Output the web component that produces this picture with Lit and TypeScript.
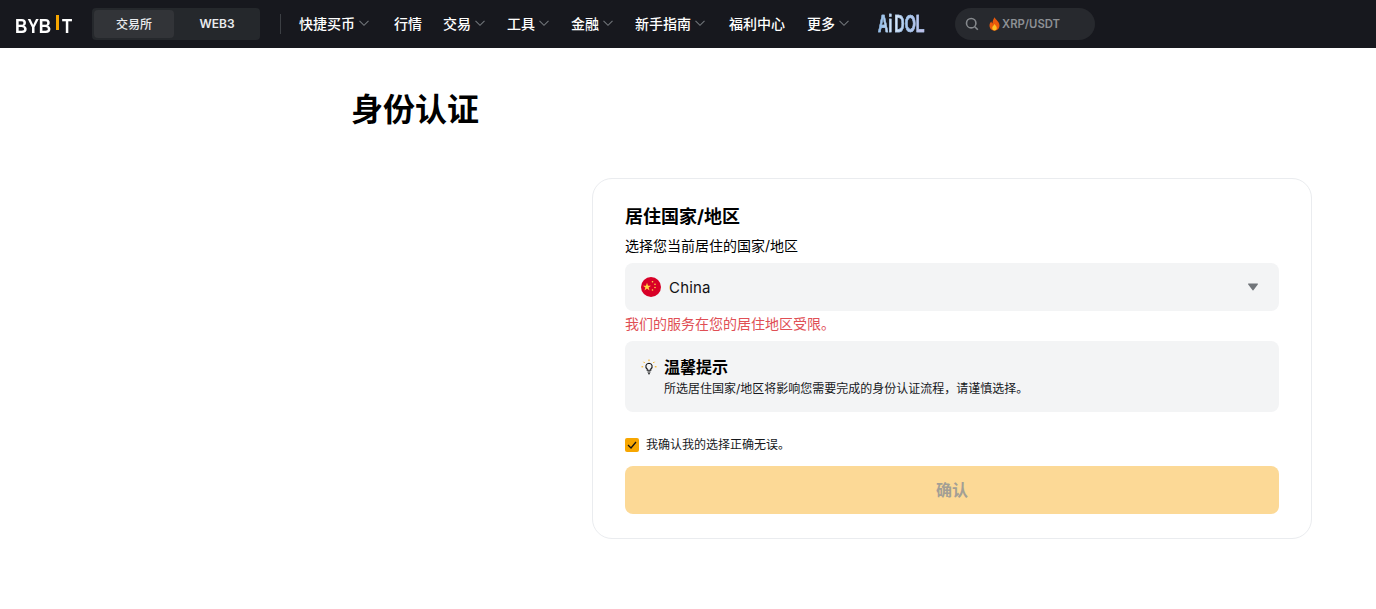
import { LitElement, html, css } from "lit";
import { customElement } from "lit/decorators.js";

const chev = html`<svg class="chev" width="12" height="12" viewBox="0 0 12 12" fill="none"><path d="M1.500 3.800 6 8.300l4.500-4.500" stroke="#71757a" stroke-width="1.100"/></svg>`;

const navItems: [string, boolean, number][] = [
  ["快捷买币", true, 24],
  ["行情", false, 21],
  ["交易", true, 21],
  ["工具", true, 21],
  ["金融", true, 21],
  ["新手指南", true, 23],
  ["福利中心", false, 22],
  ["更多", true, 0],
];

@customElement("app-root")
export class AppRoot extends LitElement {
  static styles = css`
    :host { display: block; min-height: 609px; background: #fff; color: #000;
      font-family: Inter, "Noto Sans CJK SC", sans-serif; }
    .top { height: 48px; background: #17181e; display: flex; align-items: center; padding-left: 15px; box-sizing: border-box; }
    .logo { width: 57px; height: 20px; margin-top: 3px; font: 700 19.500px/20px "Liberation Sans", sans-serif; color: #fff; display: flex; align-items: center; }
    .logo span { display: block; flex: none; transform-origin: left center; }
    .logo .a { width: 41px; transform: scaleX(0.88); }
    .logo .t { width: 10px; transform: scaleX(0.85); }
    .logo i { display: block; flex: none; width: 3px; height: 15px; background: #f7a600; margin: -7px 3px 0 0; }
    .tabs { margin-left: 20px; width: 168px; height: 32px; border-radius: 4px; background: #25282c; padding: 2px; box-sizing: border-box; display: flex; }
    .tab { flex: 1; display: flex; align-items: center; justify-content: center; font-size: 12px; font-weight: 500; color: #fff; border-radius: 4px; padding-bottom: 1px; }
    .tab.on { flex: 0 0 80px; background: #323438; color: #eaecef; }
    .tab.web { font-weight: 600; color: #eaecef; padding-left: 2px; }
    .sep { width: 1px; height: 20px; background: #3c3f44; margin: 0 18px 0 20px; }
    .nav { display: flex; align-items: center; font-size: 14px; font-weight: 500; color: #fff; padding-bottom: 2px; }
    .item { display: flex; align-items: center; gap: 2px; }
    .chev { display: block; margin-left: 1px; }
    .aidol { margin-left: 28px; width: 48px; height: 24px; }
    .aidol span { display: inline-block; font: 700 23px/24px "Liberation Sans", sans-serif; white-space: nowrap; transform: scaleX(0.62); transform-origin: left center; word-spacing: -3px;
      background: linear-gradient(100deg, #7fb2e6, #e2ecf8 35%, #a8c8ee 60%, #c6bde8); -webkit-background-clip: text; background-clip: text; color: transparent; -webkit-text-stroke: 0.6px #9dbfe6; }
    .search { margin-left: 29px; width: 140px; height: 32px; border-radius: 16px; background: #27292e; display: flex; align-items: center; padding-left: 10px; box-sizing: border-box; font-size: 11.300px; font-weight: 600; color: #8d9094; }
    .search svg { display: block; }
    .fire { margin-left: 10px; margin-right: 2px; }
    main { padding: 40px 64px 70px 351px; }
    h1 { margin: 0; font-size: 32px; line-height: 44px; font-weight: 700; }
    .card { margin: 46px 0 0 241px; border: 1px solid #eaecef; border-radius: 20px; padding: 26px 32px 24px; height: 361px; box-sizing: border-box; }
    h2 { margin: 0; font-size: 18px; line-height: 24px; font-weight: 700; }
    .sub { margin-top: 9px; font-size: 14px; line-height: 16px; }
    .select { margin-top: 9px; height: 48px; border-radius: 8px; background: #f3f4f5; display: flex; align-items: center; padding: 0 20px 0 16px; font-size: 15px; color: #121214; }
    .select .name { margin-left: 8px; flex: 1; letter-spacing: 0.2px; }
    .err { margin-top: 4px; font-size: 14px; line-height: 18px; color: #e04f55; white-space: nowrap; }
    .tip { margin-top: 8px; height: 71px; border-radius: 8px; background: #f3f4f5; display: flex; padding: 15px 16px 0; box-sizing: border-box; gap: 7px; }
    .tip svg { display: block; margin-top: 3px; }
    .tip b { display: block; font-size: 16px; line-height: 22px; font-weight: 600; margin-bottom: 3px; }
    .tip span { display: block; font-size: 12px; line-height: 16px; color: #16181c; }
    .chk { margin-top: 25px; display: flex; align-items: center; gap: 7px; font-size: 12px; line-height: 16px; color: #16181c; }
    .box { width: 14px; height: 14px; border-radius: 2px; background: #f7a600; display: flex; align-items: center; justify-content: center; }
    .btn { margin-top: 13px; height: 48px; border-radius: 8px; background: #fcd996; display: flex; align-items: center; justify-content: center; font-size: 16px; font-weight: 700; color: #a39f95; padding-bottom: 2px; box-sizing: border-box; }
  `;

  render() {
    return html`
      <div class="top">
        <div class="logo"><span class="a">BYB</span><i></i><span class="t">T</span></div>
        <div class="tabs"><div class="tab on">交易所</div><div class="tab web">WEB3</div></div>
        <div class="sep"></div>
        <div class="nav">
          ${navItems.map(([t, c, m]) => html`<div class="item" style="margin-right:${m}px">${t}${c ? chev : ""}</div>`)}
        </div>
        <div class="aidol"><span>Ai DOL</span></div>
        <div class="search">
          <svg width="14" height="14" viewBox="0 0 14 14" fill="none"><circle cx="6.200" cy="6.200" r="4.700" stroke="#85888c" stroke-width="1.600"/><path d="m9.800 9.800 3 3" stroke="#85888c" stroke-width="1.600"/></svg>
          <svg class="fire" width="11" height="14" viewBox="0 0 11 14"><path d="M5.600.3c.6 2.300 4.900 4.200 4.900 8.200 0 3.100-2.300 5.200-5 5.200S.5 11.700.5 8.600c0-1.900 1-3.200 1.900-4 .1 1 .5 1.700 1.100 2C3.500 4.300 4.300 2 5.600.3z" fill="#e8590c"/><path d="M5.500 7c.5 1.200 2.300 1.900 2.300 4 0 1.500-1 2.500-2.300 2.500S3.200 12.500 3.200 11c0-1.800 1.700-2.500 2.300-4z" fill="#fbbf24"/></svg>
          XRP/USDT
        </div>
      </div>
      <main>
        <h1>身份认证</h1>
        <div class="card">
          <h2>居住国家/地区</h2>
          <div class="sub">选择您当前居住的国家/地区</div>
          <div class="select">
            <svg width="20" height="20" viewBox="0 0 20 20"><circle cx="10" cy="10" r="10" fill="#d80027"/><path d="m6 5.800 1 2.900h3L7.600 10.500l.9 2.900L6 11.600l-2.500 1.800.9-2.900L2 8.700h3z" fill="#ffda44"/><g fill="#ffda44"><circle cx="11.500" cy="4.800" r=".8"/><circle cx="14" cy="7.300" r=".8"/><circle cx="14" cy="10.500" r=".8"/><circle cx="11.500" cy="13" r=".8"/></g></svg>
            <span class="name">China</span>
            <svg width="12" height="8" viewBox="0 0 12 8"><path d="M1.700.5h8.600c.6 0 .8.500.5.900L6.400 7.300c-.2.300-.6.300-.8 0L1.200 1.400C.9 1 1.100.5 1.700.5z" fill="#71757a"/></svg>
          </div>
          <div class="err">我们的服务在您的居住地区受限。</div>
          <div class="tip">
            <svg width="16" height="16" viewBox="0 0 16 16" fill="none"><path d="M8 4.200a3.200 3.200 0 0 0-1.800 5.800v1.200h3.600V10A3.200 3.200 0 0 0 8 4.200z" stroke="#121214" stroke-width="1.100"/><path d="M6.500 13h3M7 14.800h2" stroke="#121214" stroke-width="1.100"/><path d="M8 .5v1.700M2.500 2.800l1.200 1.200M13.500 2.800l-1.200 1.200M.5 7.800h1.700M13.800 7.800h1.700" stroke="#f7a600"/></svg>
            <div><b>温馨提示</b><span>所选居住国家/地区将影响您需要完成的身份认证流程，请谨慎选择。</span></div>
          </div>
          <div class="chk">
            <div class="box"><svg width="10" height="8" viewBox="0 0 10 8" fill="none"><path d="m1 4 3 3 5-6" stroke="#121214" stroke-width="1.300"/></svg></div>
            我确认我的选择正确无误。
          </div>
          <div class="btn">确认</div>
        </div>
      </main>
    `;
  }
}
